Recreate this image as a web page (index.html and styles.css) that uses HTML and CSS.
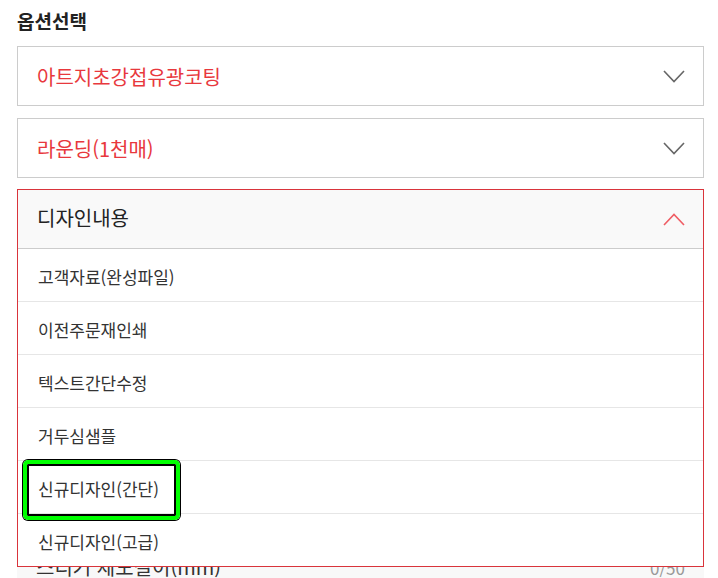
FILE: index.html
```html
<!DOCTYPE html>
<html lang="ko">
<head>
    <meta charset="UTF-8">
    <meta name="viewport" content="width=device-width, initial-scale=1.0">
    <title>옵션선택</title>
    <link rel="stylesheet" href="styles.css">
</head>
<body>
    <div class="options">
        <h2 class="title">옵션선택</h2>

        <div class="select">
            <div class="select-head">
                <span class="value">아트지초강접유광코팅</span>
                <svg class="arrow" width="22" height="13" viewBox="0 0 22 13"><polyline points="1,1 11,11.5 21,1" fill="none" stroke="#666" stroke-width="1.6"/></svg>
            </div>
        </div>

        <div class="select">
            <div class="select-head">
                <span class="value">라운딩(1천매)</span>
                <svg class="arrow" width="22" height="13" viewBox="0 0 22 13"><polyline points="1,1 11,11.5 21,1" fill="none" stroke="#666" stroke-width="1.6"/></svg>
            </div>
        </div>

        <div class="select open">
            <div class="select-head">
                <span class="label">디자인내용</span>
                <svg class="arrow" width="22" height="13" viewBox="0 0 22 13"><polyline points="1,12 11,1.5 21,12" fill="none" stroke="#ef5d64" stroke-width="1.6"/></svg>
            </div>
            <ul class="select-list">
                <li>고객자료(완성파일)</li>
                <li>이전주문재인쇄</li>
                <li>텍스트간단수정</li>
                <li>거두심샘플</li>
                <li class="marked">신규디자인(간단)<span class="mark"></span></li>
                <li>신규디자인(고급)</li>
            </ul>
        </div>

        <div class="field">
            <div class="field-row">
                <span class="field-label">스티커 제도길이(mm)</span>
                <span class="count">0/50</span>
            </div>
        </div>
    </div>
</body>
</html>
```

FILE: styles.css
```css
body {
    margin: 0;
    padding: 8px 14px 0 17px;
    font-family: "Noto Sans CJK KR", "Noto Sans", sans-serif;
    color: #333;
    background: #fff;
}
.options {
    width: 687px;
}
.title {
    margin: 0 0 12px;
    font-size: 19px;
    line-height: 26px;
    font-weight: bold;
    color: #222;
}
.select {
    position: relative;
    border: 1px solid #ccc;
    margin-bottom: 12px;
    background: #fff;
}
.select-head {
    height: 58px;
    display: flex;
    align-items: center;
    justify-content: space-between;
    padding: 0 18px 0 19px;
}
.value {
    font-size: 20px;
    color: #e8383d;
}
.label {
    font-size: 20px;
    color: #222;
    margin-top: -3px;
}
.arrow {
    display: block;
}
.select.open {
    border-color: #d9343b;
    margin-top: -1px;
}
.select.open .select-head {
    background: #f9f9f9;
    border-bottom: 1px solid #ccc;
}
.select-list {
    position: absolute;
    top: 100%;
    left: -1px;
    right: -1px;
    margin: 0;
    padding: 0;
    list-style: none;
    background: #fff;
    border: 1px solid #d9343b;
    border-top: none;
    z-index: 2;
}
.select-list li {
    position: relative;
    display: flex;
    align-items: center;
    padding: 2px 0 0 20px;
    box-sizing: border-box;
    height: 53px;
    font-size: 17px;
    color: #333;
    border-bottom: 1px solid #e6e6e6;
}
.select-list li:last-child {
    border-bottom: none;
    height: 52px;
}
.mark {
    position: absolute;
    top: -1px;
    left: 5px;
    width: 157px;
    height: 60px;
    box-sizing: border-box;
    border: 4px solid #00ff00;
    border-radius: 5px;
    box-shadow: 0 0 0 1px #000, inset 0 0 0 2px #000;
}
.field {
    background: #f8f8f8;
    padding: 292px 19px 20px 19px;
}
.field-row {
    display: flex;
    justify-content: space-between;
    align-items: center;
}
.field-label {
    font-size: 20px;
    line-height: 26px;
    color: #333;
}
.count {
    font-size: 17px;
    color: #999;
}
```
